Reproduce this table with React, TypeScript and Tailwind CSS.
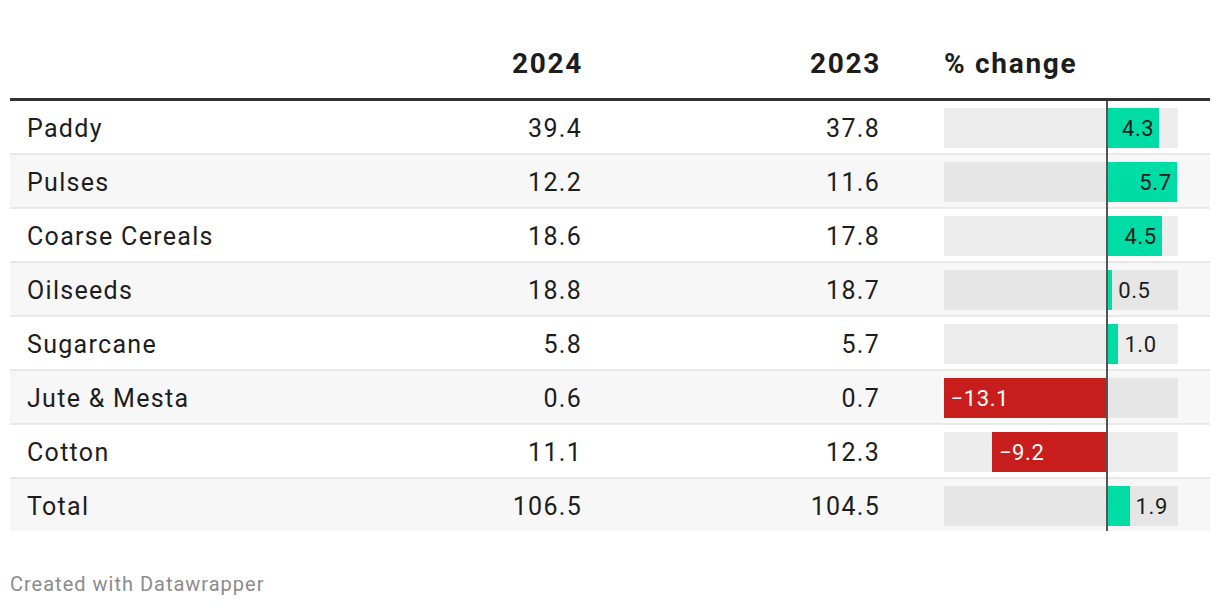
import React from 'react';

type Row = { name: string; y24: string; y23: string; change: number };

const rows: Row[] = [
  { name: 'Paddy', y24: '39.4', y23: '37.8', change: 4.3 },
  { name: 'Pulses', y24: '12.2', y23: '11.6', change: 5.7 },
  { name: 'Coarse Cereals', y24: '18.6', y23: '17.8', change: 4.5 },
  { name: 'Oilseeds', y24: '18.8', y23: '18.7', change: 0.5 },
  { name: 'Sugarcane', y24: '5.8', y23: '5.7', change: 1.0 },
  { name: 'Jute & Mesta', y24: '0.6', y23: '0.7', change: -13.1 },
  { name: 'Cotton', y24: '11.1', y23: '12.3', change: -9.2 },
  { name: 'Total', y24: '106.5', y23: '104.5', change: 1.9 },
];

// px per percentage point; zero sits 162px into the 234px bar track
const SCALE = 12.4;
const ZERO = 162;

function fmt(v: number) {
  return v < 0 ? `\u2212${Math.abs(v).toFixed(1)}` : v.toFixed(1);
}

function ChangeBar({ value, striped }: { value: number; striped: boolean }) {
  const w = Math.abs(value) * SCALE;
  const inside = w > 40;
  const track = striped ? 'bg-[#e6e6e6]' : 'bg-[#ededed]';

  return (
    <div className={`relative h-[40px] w-[234px] ${track}`}>
      {value < 0 ? (
        <div
          className="absolute top-0 h-full bg-[#c71e1d] flex items-center pl-[7px] text-white"
          style={{ left: ZERO - w, width: w }}
        >
          {fmt(value)}
        </div>
      ) : (
        <>
          <div
            className="absolute top-0 h-full bg-[#00dca6] flex items-center justify-end pr-[5px]"
            style={{ left: ZERO, width: w }}
          >
            {inside && fmt(value)}
          </div>
          {!inside && (
            <div className="absolute top-0 h-full flex items-center" style={{ left: ZERO + w + 6 }}>
              {fmt(value)}
            </div>
          )}
        </>
      )}
    </div>
  );
}

export default function App() {
  return (
    <div className="bg-white w-[1220px] h-[608px] px-[10px] pt-[38px] text-[#1d1d1d] font-['Roboto',sans-serif]">
      <div className="flex items-end h-[63px] pb-[20px] border-b-[3px] border-[#333333] text-[28px] font-bold leading-none tracking-[1.7px]">
        <div className="w-[400px]" />
        <div className="w-[173px] text-right">2024</div>
        <div className="w-[298px] text-right">2023</div>
        <div className="w-[63px]" />
        <div className="w-[234px]">% change</div>
      </div>

      <div className="relative">
        {rows.map((r, i) => {
          const striped = i % 2 === 1;
          const last = i === rows.length - 1;
          return (
            <div
              key={r.name}
              className={`flex items-center pt-[3px] text-[25px] tracking-[1.3px] ${striped ? 'bg-[#f7f7f7]' : 'bg-white'} ${
                last ? 'h-[52px]' : 'h-[54px] border-b-2 border-[#e8e8e8]'
              }`}
            >
              <div className="w-[400px] pl-[17px]">{r.name}</div>
              <div className="w-[172px] text-right">{r.y24}</div>
              <div className="w-[298px] text-right">{r.y23}</div>
              <div className="w-[64px]" />
              <div className="w-[234px] text-[22px] tracking-[0.6px] -mt-[1px]">
                <ChangeBar value={r.change} striped={striped} />
              </div>
            </div>
          );
        })}
        <div className="absolute top-0 bottom-0 left-[1096px] w-[2px] bg-[#555555]" />
      </div>

      <div className="mt-[38px] text-[20px] tracking-[1px] text-[#8b8b8b]">Created with Datawrapper</div>
    </div>
  );
}
